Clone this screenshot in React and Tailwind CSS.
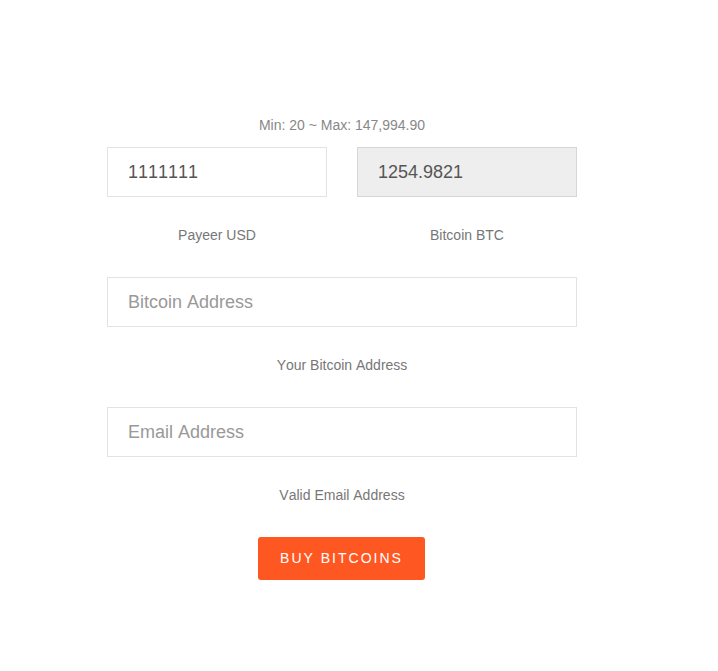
import { useState } from 'react';

const inputBase =
  'w-full h-[50px] px-5 text-[18px] text-[#555] border outline-none placeholder:text-[#999] [font-kerning:none]';

const App = () => {
  const [usd, setUsd] = useState('1111111');
  const [address, setAddress] = useState('');
  const [email, setEmail] = useState('');

  const btc = '1254.9821';

  return (
    <div className="min-h-screen bg-white font-['Liberation_Sans',Arial,sans-serif] [font-kerning:none] pt-[115px]">
      <form className="w-[470px] ml-[107px]" onSubmit={(e) => e.preventDefault()}>
        <p className="text-center text-[14px] leading-5 text-[#888] mb-3">Min: 20 ~ Max: 147,994.90</p>

        <div className="grid grid-cols-2 gap-[30px]">
          <div>
            <input
              type="text"
              value={usd}
              onChange={(e) => setUsd(e.target.value)}
              className={`${inputBase} bg-white border-[#e3e3e3]`}
            />
            <p className="text-center text-[14px] leading-5 text-[#777] mt-7">Payeer USD</p>
          </div>
          <div>
            <input
              type="text"
              value={btc}
              readOnly
              className={`${inputBase} bg-[#eee] border-[#d6d6d6]`}
            />
            <p className="text-center text-[14px] leading-5 text-[#777] mt-7">Bitcoin BTC</p>
          </div>
        </div>

        <input
          type="text"
          value={address}
          onChange={(e) => setAddress(e.target.value)}
          placeholder="Bitcoin Address"
          className={`${inputBase} bg-white border-[#e3e3e3] mt-8`}
        />
        <p className="text-center text-[14px] leading-5 text-[#777] mt-7">Your Bitcoin Address</p>

        <input
          type="email"
          value={email}
          onChange={(e) => setEmail(e.target.value)}
          placeholder="Email Address"
          className={`${inputBase} bg-white border-[#e3e3e3] mt-8`}
        />
        <p className="text-center text-[14px] leading-5 text-[#777] mt-7">Valid Email Address</p>

        <div className="flex justify-center mt-8">
          <button
            type="submit"
            className="w-[167px] h-[43px] ml-[-1px] rounded-[3px] bg-[#ff5722] text-white text-[14px] tracking-[2px] uppercase"
          >
            Buy Bitcoins
          </button>
        </div>
      </form>
    </div>
  );
};

export default App;
